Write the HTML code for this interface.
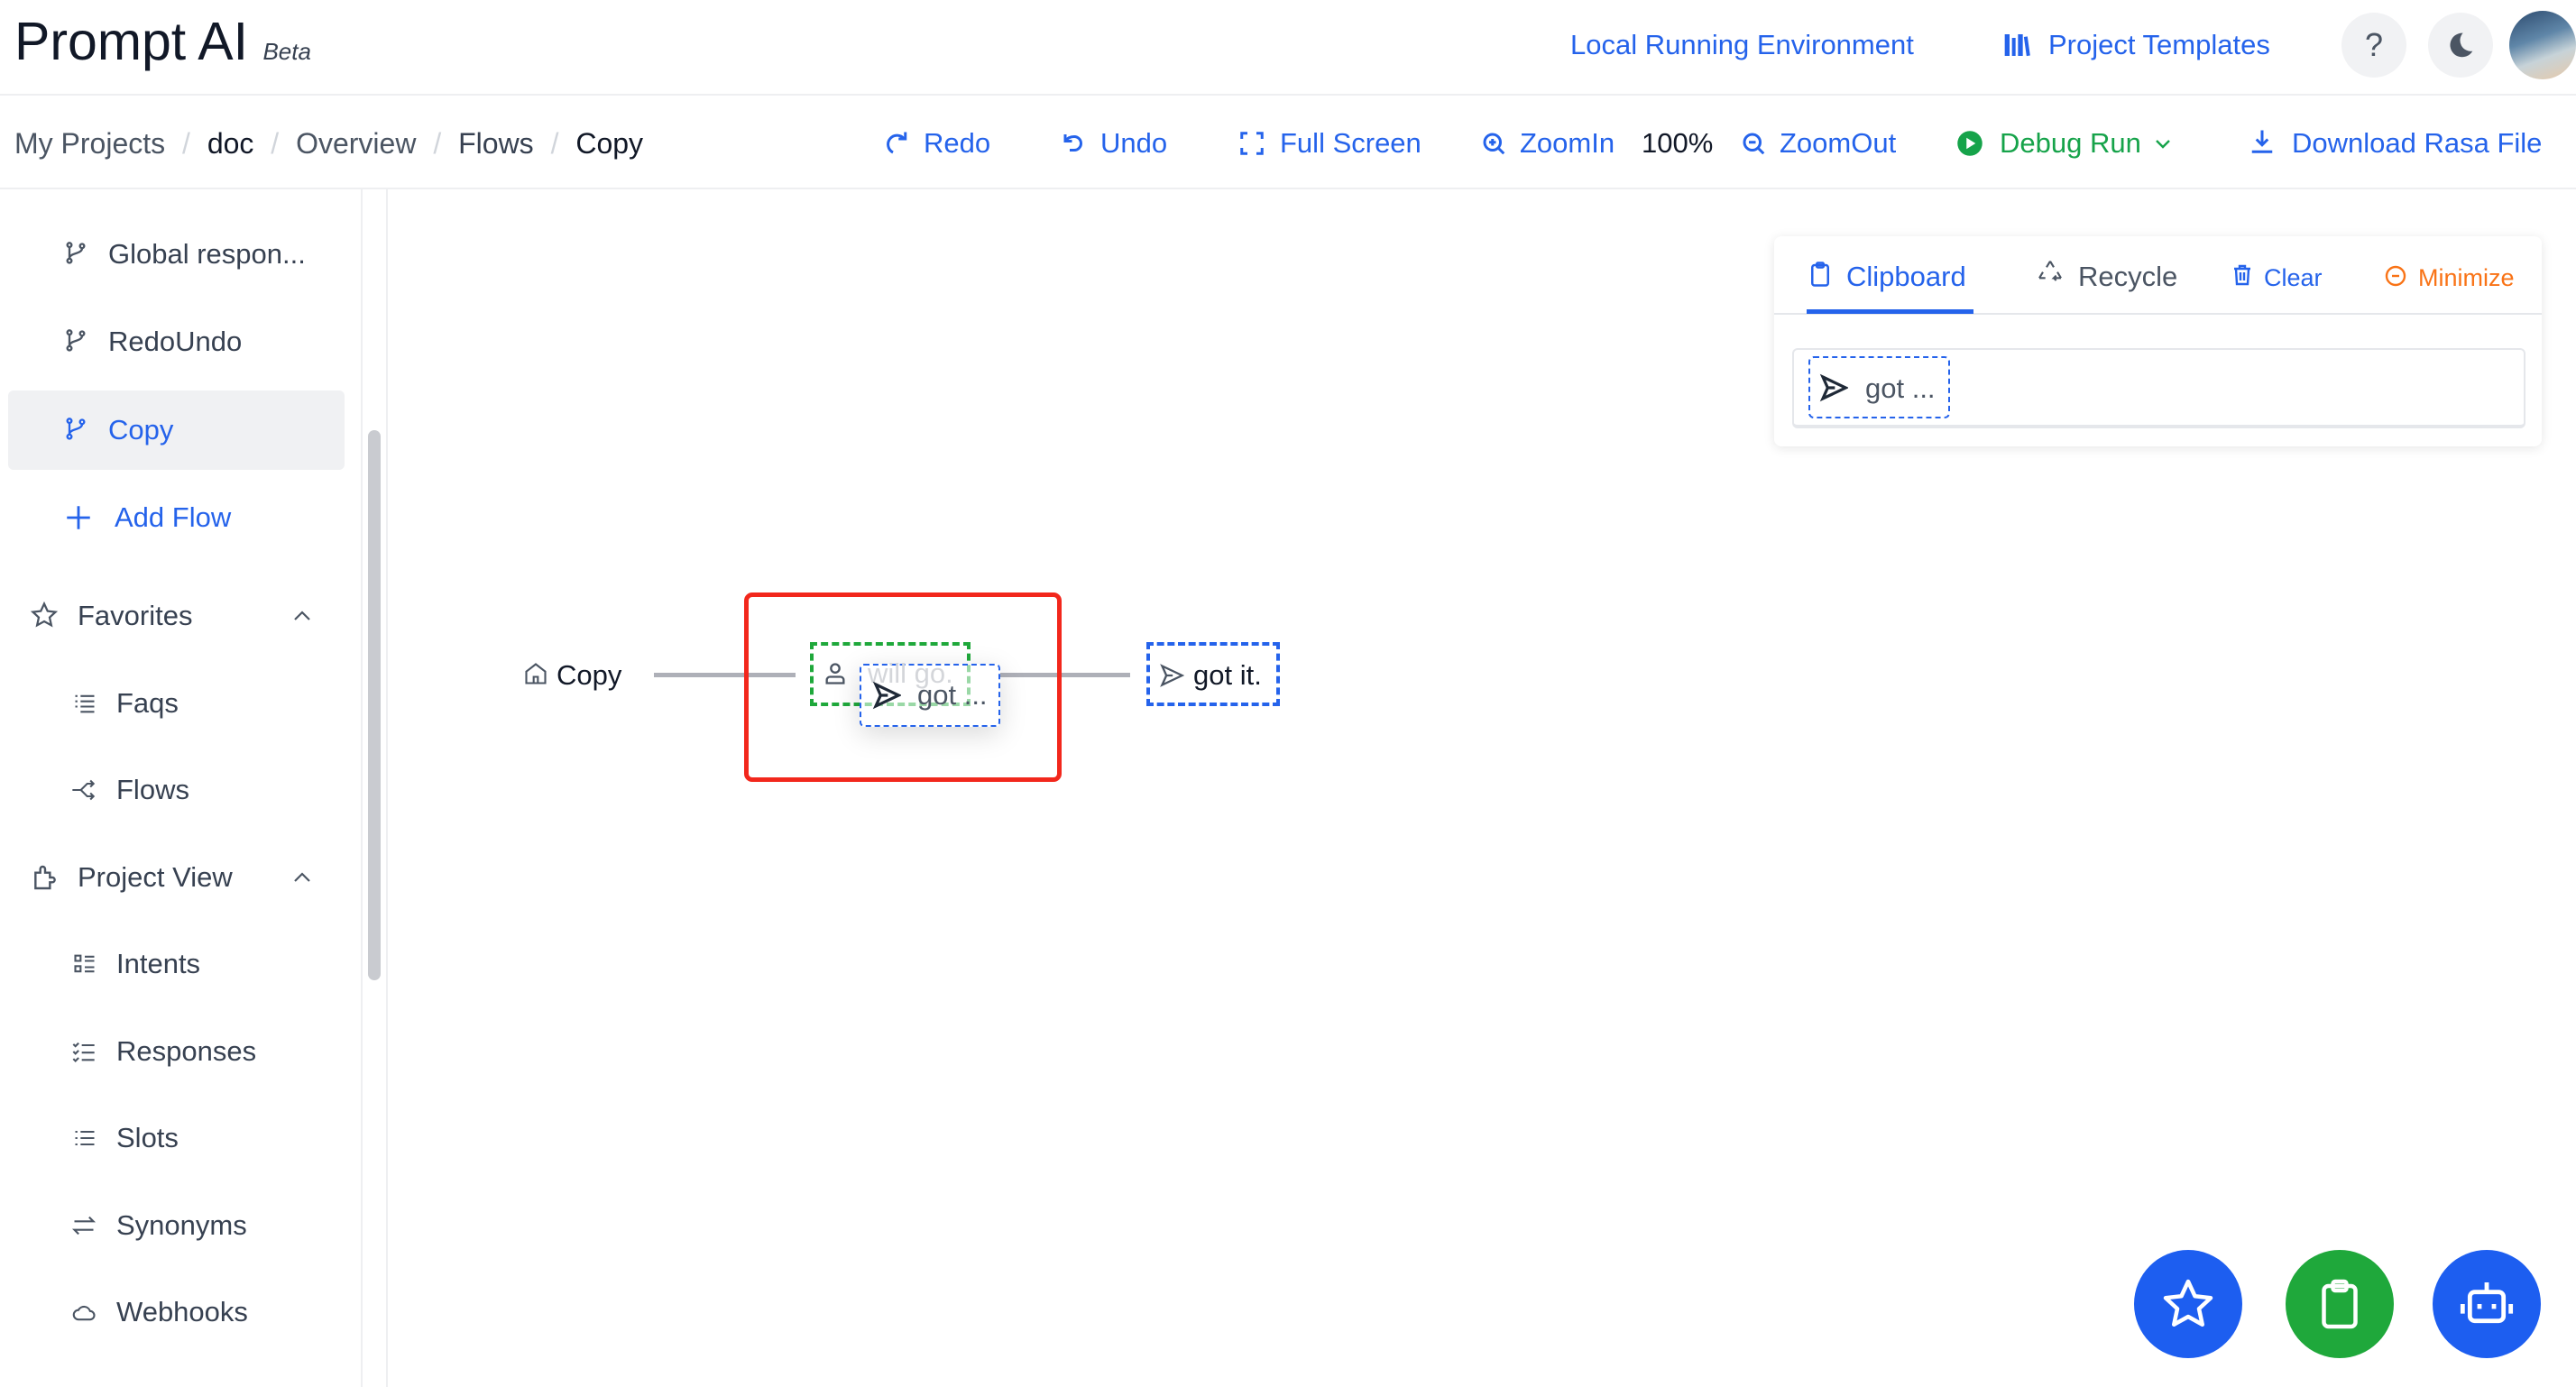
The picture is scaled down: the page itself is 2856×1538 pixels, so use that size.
<!DOCTYPE html>
<html><head><meta charset="utf-8"><style>
*{box-sizing:border-box;margin:0;padding:0}
body{width:2856px;height:1538px;background:#fff;font-family:"Liberation Sans",sans-serif;color:#1f2937;position:relative;overflow:hidden}
.a{position:absolute;white-space:nowrap}
.t31{font-size:31px}
svg{position:absolute}
.side{font-size:31px;color:#374151}
.blue{color:#2563eb}
</style></head><body>
<!-- header -->
<div class="a" style="left:16px;top:12px;font-size:59px;color:#111827">Prompt AI <i style="font-size:26px;color:#374151">Beta</i></div>
<div class="a t31 blue" style="left:1741px;top:32px">Local Running Environment</div>
<svg style="left:2220px;top:34px" width="32" height="32" viewBox="0 0 24 24" fill="#2563eb"><rect x="2" y="3" width="4" height="18"/><rect x="8" y="6" width="3" height="15"/><rect x="13" y="3" width="4" height="18"/><rect x="19" y="5" width="3" height="16" transform="rotate(-8 20 13)"/></svg>
<div class="a t31 blue" style="left:2271px;top:32px">Project Templates</div>
<div class="a" style="left:2596px;top:14px;width:72px;height:72px;border-radius:50%;background:#f1f2f4;text-align:center;line-height:72px;font-size:36px;color:#4b5563">?</div>
<div class="a" style="left:2692px;top:14px;width:72px;height:72px;border-radius:50%;background:#f1f2f4"></div>
<svg style="left:2712px;top:34px" width="32" height="32" viewBox="0 0 24 24"><path d="M14 2a10 10 0 1 0 8 15A9 9 0 0 1 14 2z" fill="#4b5563"/></svg>
<div class="a" style="left:2782px;top:12px;width:74px;height:76px;border-radius:50%;background:linear-gradient(160deg,#2c4a6e 0%,#5f86a8 40%,#c7d3d8 65%,#e8c9a8 100%)"></div>
<div class="a" style="left:0;top:104px;width:2856px;height:2px;background:#eeeff1"></div>
<!-- toolbar -->
<div class="a" style="left:16px;top:141px;color:#4b5563;font-size:32px">My Projects <span style="color:#d1d5db;margin:0 10px">/</span> <span style="color:#111827">doc</span> <span style="color:#d1d5db;margin:0 10px">/</span> Overview <span style="color:#d1d5db;margin:0 10px">/</span> <span style="color:#374151">Flows</span> <span style="color:#d1d5db;margin:0 10px">/</span> <span style="color:#111827">Copy</span></div>
<svg style="left:980px;top:144px" width="30" height="30" viewBox="0 0 24 24" fill="none" stroke="#2563eb" stroke-width="2.4"><path d="M18 8A8 8 0 1 0 8 20"/><path d="M13 8h6V2"/></svg>
<div class="a t31 blue" style="left:1024px;top:141px">Redo</div>
<svg style="left:1176px;top:144px" width="30" height="30" viewBox="0 0 24 24" fill="none" stroke="#2563eb" stroke-width="2.4"><path d="M4 4v6h6"/><path d="M4 10c2-3 5-4 8-4a6 6 0 0 1 0 12H8"/></svg>
<div class="a t31 blue" style="left:1220px;top:141px">Undo</div>
<svg style="left:1373px;top:144px" width="30" height="30" viewBox="0 0 24 24" fill="none" stroke="#2563eb" stroke-width="2.4"><path d="M3 8V3h5M16 3h5v5M21 16v5h-5M8 21H3v-5"/></svg>
<div class="a t31 blue" style="left:1419px;top:141px">Full Screen</div>
<svg style="left:1641px;top:144px" width="30" height="30" viewBox="0 0 24 24" fill="none" stroke="#2563eb" stroke-width="2.4"><circle cx="11" cy="11" r="7"/><path d="M16 16l5 5M11 8v6M8 11h6"/></svg>
<div class="a t31 blue" style="left:1685px;top:141px">ZoomIn</div>
<div class="a t31" style="left:1820px;top:141px;color:#111827">100%</div>
<svg style="left:1929px;top:144px" width="30" height="30" viewBox="0 0 24 24" fill="none" stroke="#2563eb" stroke-width="2.4"><circle cx="11" cy="11" r="7"/><path d="M16 16l5 5M8 11h6"/></svg>
<div class="a t31 blue" style="left:1973px;top:141px">ZoomOut</div>
<svg style="left:2169px;top:144px" width="30" height="30" viewBox="0 0 24 24"><circle cx="12" cy="12" r="11" fill="#16a34a"/><path d="M9 7l8 5-8 5z" fill="#fff"/></svg>
<div class="a t31" style="left:2217px;top:141px;color:#16a34a">Debug Run</div>
<svg style="left:2386px;top:148px" width="24" height="24" viewBox="0 0 24 24" fill="none" stroke="#16a34a" stroke-width="2.4"><path d="M5 8l7 7 7-7"/></svg>
<svg style="left:2493px;top:142px" width="30" height="30" viewBox="0 0 24 24" fill="none" stroke="#2563eb" stroke-width="2.4"><path d="M12 2v13M7 10l5 5 5-5M3 21h18"/></svg>
<div class="a t31 blue" style="left:2541px;top:141px">Download Rasa File</div>
<div class="a" style="left:0;top:208px;width:2856px;height:2px;background:#eeeff1"></div>
<!-- sidebar -->
<div class="a" style="left:400px;top:210px;width:2px;height:1328px;background:#eeeff1"></div>
<div class="a" style="left:428px;top:210px;width:2px;height:1328px;background:#eeeff1"></div>
<div class="a" style="left:408px;top:477px;width:14px;height:610px;border-radius:7px;background:#c9cbd0"></div>
<div class="a" style="left:9px;top:433px;width:373px;height:88px;border-radius:6px;background:#f0f1f3"></div>
<svg style="left:70px;top:266px" width="28" height="30" viewBox="0 0 24 24" fill="none" stroke="#4b5563" stroke-width="2"><circle cx="6" cy="19" r="2"/><circle cx="6" cy="4" r="2"/><circle cx="18" cy="5" r="2"/><path d="M6 6v11M18 7c0 6-12 4-12 10"/></svg>
<div class="a side" style="left:120px;top:264px">Global respon...</div>
<svg style="left:70px;top:363px" width="28" height="30" viewBox="0 0 24 24" fill="none" stroke="#4b5563" stroke-width="2"><circle cx="6" cy="19" r="2"/><circle cx="6" cy="4" r="2"/><circle cx="18" cy="5" r="2"/><path d="M6 6v11M18 7c0 6-12 4-12 10"/></svg>
<div class="a side" style="left:120px;top:361px">RedoUndo</div>
<svg style="left:70px;top:461px" width="28" height="30" viewBox="0 0 24 24" fill="none" stroke="#2563eb" stroke-width="2"><circle cx="6" cy="19" r="2"/><circle cx="6" cy="4" r="2"/><circle cx="18" cy="5" r="2"/><path d="M6 6v11M18 7c0 6-12 4-12 10"/></svg>
<div class="a side blue" style="left:120px;top:459px">Copy</div>
<svg style="left:70px;top:557px" width="34" height="34" viewBox="0 0 24 24" fill="none" stroke="#2563eb" stroke-width="2"><path d="M12 3v18M3 12h18"/></svg>
<div class="a side blue" style="left:127px;top:556px">Add Flow</div>
<svg style="left:34px;top:667px" width="30" height="30" viewBox="0 0 24 24" fill="none" stroke="#4b5563" stroke-width="1.8"><path d="M12 2l3 6.5 7 .8-5.2 4.8 1.5 7L12 17.6 5.7 21.1l1.5-7L2 9.3l7-.8z"/></svg>
<div class="a side" style="left:86px;top:665px">Favorites</div>
<svg style="left:320px;top:671px" width="30" height="24" viewBox="0 0 24 24" fill="none" stroke="#4b5563" stroke-width="2.2"><path d="M4 16l8-8 8 8"/></svg>
<svg style="left:80px;top:766px" width="28" height="28" viewBox="0 0 24 24" fill="none" stroke="#4b5563" stroke-width="1.8"><path d="M3 5h2M8 5h13M3 10h2M8 10h13M3 15h2M8 15h13M8 20h13"/></svg>
<div class="a side" style="left:129px;top:762px">Faqs</div>
<svg style="left:76px;top:862px" width="32" height="28" viewBox="0 0 24 24" fill="none" stroke="#4b5563" stroke-width="1.8"><path d="M2 12h8l6-6h6M10 12l6 6h6M19 3l3 3-3 3M19 15l3 3-3 3"/></svg>
<div class="a side" style="left:129px;top:858px">Flows</div>
<svg style="left:34px;top:957px" width="32" height="32" viewBox="0 0 24 24" fill="none" stroke="#4b5563" stroke-width="1.8"><path d="M4 8h4V5a2 2 0 0 1 4 0v3h4v4h2a2 2 0 0 1 0 4h-2v5H4z"/></svg>
<div class="a side" style="left:86px;top:955px">Project View</div>
<svg style="left:320px;top:961px" width="30" height="24" viewBox="0 0 24 24" fill="none" stroke="#4b5563" stroke-width="2.2"><path d="M4 16l8-8 8 8"/></svg>
<svg style="left:80px;top:1055px" width="28" height="28" viewBox="0 0 24 24" fill="none" stroke="#4b5563" stroke-width="1.8"><rect x="3" y="4" width="5" height="5"/><rect x="3" y="14" width="5" height="5"/><path d="M12 5h9M12 9h9M12 15h9M12 19h9"/></svg>
<div class="a side" style="left:129px;top:1051px">Intents</div>
<svg style="left:78px;top:1152px" width="30" height="28" viewBox="0 0 24 24" fill="none" stroke="#4b5563" stroke-width="1.8"><path d="M2 5l2 2 3-3M2 12l2 2 3-3M2 19l2 2 3-3M10 6h12M10 13h12M10 20h12"/></svg>
<div class="a side" style="left:129px;top:1148px">Responses</div>
<svg style="left:80px;top:1248px" width="28" height="28" viewBox="0 0 24 24" fill="none" stroke="#4b5563" stroke-width="1.8"><path d="M3 6h2M8 6h13M3 12h2M8 12h13M3 18h2M8 18h13"/></svg>
<div class="a side" style="left:129px;top:1244px">Slots</div>
<svg style="left:78px;top:1345px" width="30" height="28" viewBox="0 0 24 24" fill="none" stroke="#4b5563" stroke-width="1.8"><path d="M3 8h18l-4-4M21 16H3l4 4"/></svg>
<div class="a side" style="left:129px;top:1341px">Synonyms</div>
<svg style="left:78px;top:1441px" width="32" height="28" viewBox="0 0 24 24" fill="none" stroke="#4b5563" stroke-width="1.8"><path d="M6 19h11a4 4 0 0 0 0-8 6 6 0 0 0-11-1 4.5 4.5 0 0 0 0 9z"/></svg>
<div class="a side" style="left:129px;top:1437px">Webhooks</div>
<!-- canvas -->
<svg style="left:580px;top:733px" width="28" height="28" viewBox="0 0 24 24" fill="none" stroke="#4b5563" stroke-width="1.8"><path d="M3 10l9-7 9 7v11H3z M10 21v-6h4v6"/></svg>
<div class="a t31" style="left:617px;top:731px;color:#111827">Copy</div>
<div class="a" style="left:725px;top:746px;width:157px;height:5px;background:#aeb0b8"></div>
<div class="a" style="left:1109px;top:746px;width:144px;height:5px;background:#aeb0b8"></div>
<div class="a" style="left:825px;top:657px;width:352px;height:210px;border:5px solid #f2271c;border-radius:9px"></div>
<div class="a" style="left:898px;top:712px;width:178px;height:71px;border:4px dashed #1fa83b"></div>
<svg style="left:912px;top:733px" width="28" height="28" viewBox="0 0 24 24" fill="none" stroke="#4b5563" stroke-width="2"><circle cx="12" cy="7" r="4"/><path d="M4 21v-3a3 3 0 0 1 3-3h10a3 3 0 0 1 3 3v3z"/></svg>
<div class="a" style="left:953px;top:736px;width:156px;height:70px;border:2px dashed #2563eb;border-radius:5px;background:rgba(255,255,255,0.55);box-shadow:0 8px 30px rgba(0,0,0,0.15)"></div>
<div class="a t31" style="left:962px;top:729px;color:#d4d6da">will go.</div>
<svg style="left:967px;top:755px" width="32" height="32" viewBox="0 0 24 24" fill="none" stroke="#1f2937" stroke-width="2.4"><path d="M3 3l19 9-19 9 4-9z M7 12h6"/></svg>
<div class="a t31" style="left:1017px;top:753px;color:#4b5563">got ...</div>
<div class="a" style="left:1271px;top:712px;width:148px;height:71px;border:4px dashed #2563eb"></div>
<svg style="left:1285px;top:735px" width="28" height="28" viewBox="0 0 24 24" fill="none" stroke="#4b5563" stroke-width="2"><path d="M3 3l19 9-19 9 4-9z M7 12h6"/></svg>
<div class="a t31" style="left:1323px;top:731px;color:#111827">got it.</div>
<!-- clipboard panel -->
<div class="a" style="left:1967px;top:262px;width:851px;height:233px;border-radius:8px;background:#fff;box-shadow:0 2px 12px rgba(0,0,0,0.1)"></div>
<div class="a" style="left:1967px;top:347px;width:851px;height:2px;background:#e5e7eb"></div>
<div class="a" style="left:2003px;top:343px;width:185px;height:5px;background:#2563eb"></div>
<svg style="left:2003px;top:287px" width="30" height="34" viewBox="0 0 24 24" fill="none" stroke="#2563eb" stroke-width="2"><rect x="5" y="4" width="14" height="18" rx="2"/><rect x="9" y="2" width="6" height="4" rx="1"/></svg>
<div class="a blue" style="left:2047px;top:289px;font-size:31px">Clipboard</div>
<svg style="left:2257px;top:287px" width="32" height="32" viewBox="0 0 24 24" fill="none" stroke="#4b5563" stroke-width="1.6"><path d="M12 2l3 5M12 2L9 7M3 16l3-5M3 16h5M21 16l-3-5M21 16h-6l2-2M15 16l2 2"/></svg>
<div class="a" style="left:2304px;top:289px;font-size:31px;color:#4b5563">Recycle</div>
<svg style="left:2474px;top:292px" width="24" height="26" viewBox="0 0 24 24" fill="none" stroke="#2563eb" stroke-width="2.4"><path d="M3 5h18M9 5V2h6v3M5 5l1 17h12l1-17M10 9v9M14 9v9"/></svg>
<div class="a blue" style="left:2510px;top:293px;font-size:27px">Clear</div>
<svg style="left:2644px;top:294px" width="24" height="24" viewBox="0 0 24 24" fill="none" stroke="#f97316" stroke-width="2.4"><circle cx="12" cy="12" r="10"/><path d="M8 12h8"/></svg>
<div class="a" style="left:2681px;top:293px;font-size:27px;color:#f97316">Minimize</div>
<div class="a" style="left:1987px;top:386px;width:813px;height:89px;border:2px solid #e5e7eb;border-bottom:4px solid #e5e7eb;border-radius:6px"></div>
<div class="a" style="left:2005px;top:395px;width:157px;height:69px;border:2px dashed #2563eb;border-radius:6px"></div>
<svg style="left:2017px;top:414px" width="32" height="32" viewBox="0 0 24 24" fill="none" stroke="#1f2937" stroke-width="2.4"><path d="M3 3l19 9-19 9 4-9z M7 12h6"/></svg>
<div class="a t31" style="left:2068px;top:413px;color:#4b5563">got ...</div>
<!-- floating buttons -->
<div class="a" style="left:2366px;top:1386px;width:120px;height:120px;border-radius:50%;background:#1d5ef0"></div>
<svg style="left:2396px;top:1416px" width="60" height="60" viewBox="0 0 24 24" fill="none" stroke="#fff" stroke-width="1.8" stroke-linejoin="round"><path d="M12 2l3 6.5 7 .8-5.2 4.8 1.5 7L12 17.6 5.7 21.1l1.5-7L2 9.3l7-.8z"/></svg>
<div class="a" style="left:2534px;top:1386px;width:120px;height:120px;border-radius:50%;background:#1fa83b"></div>
<svg style="left:2564px;top:1414px" width="60" height="64" viewBox="0 0 24 24" fill="none" stroke="#fff" stroke-width="1.8"><rect x="5" y="4" width="14" height="18" rx="2"/><rect x="9" y="2" width="6" height="4" rx="1"/></svg>
<div class="a" style="left:2697px;top:1386px;width:120px;height:120px;border-radius:50%;background:#1d5ef0"></div>
<svg style="left:2725px;top:1414px" width="64" height="64" viewBox="0 0 24 24" fill="none" stroke="#fff" stroke-width="1.8"><path d="M12 3v4"/><rect x="5" y="7" width="14" height="12" rx="2"/><path d="M2 12v4M22 12v4M9 12v2M15 12v2"/></svg>
</body></html>
